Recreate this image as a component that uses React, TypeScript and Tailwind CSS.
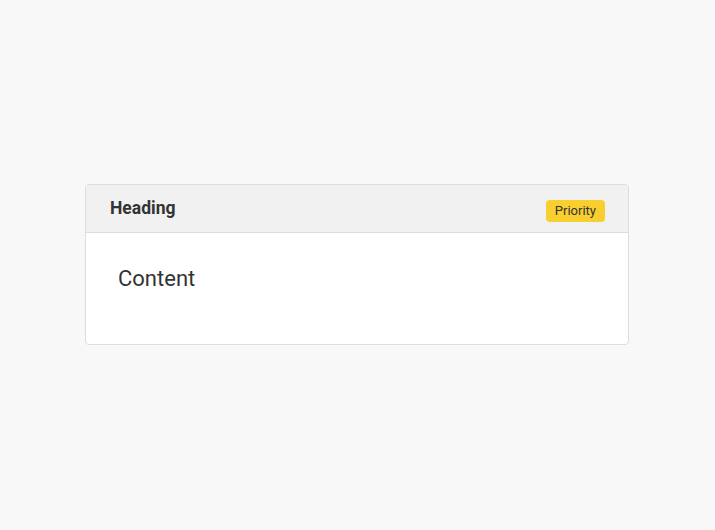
import React from 'react';

const App: React.FC = () => {
  return (
    <div className="flex min-h-screen w-full items-center justify-center bg-[#f8f8f8] pr-px pb-px" style={{ fontFamily: 'Roboto, "Liberation Sans", sans-serif' }}>
      <div className="w-[544px] overflow-hidden rounded-[4px] border border-[#dddddd] bg-white">
        <div className="flex h-[48px] items-center justify-between border-b border-[#dddddd] bg-[#f1f1f1] pl-6 pr-[23px]">
          <h2 className="text-[17.5px] font-bold text-[#333333]">Heading</h2>
          <span className="mt-1 rounded-[4px] bg-[#f9cf2f] px-[9px] py-[2px] text-[13px] leading-[18px] text-[#333333]">Priority</span>
        </div>
        <div className="px-8 pt-[32px] pb-[51px]">
          <p className="text-[22px] leading-[28px] text-[#333333]">Content</p>
        </div>
      </div>
    </div>
  );
};

export default App;
